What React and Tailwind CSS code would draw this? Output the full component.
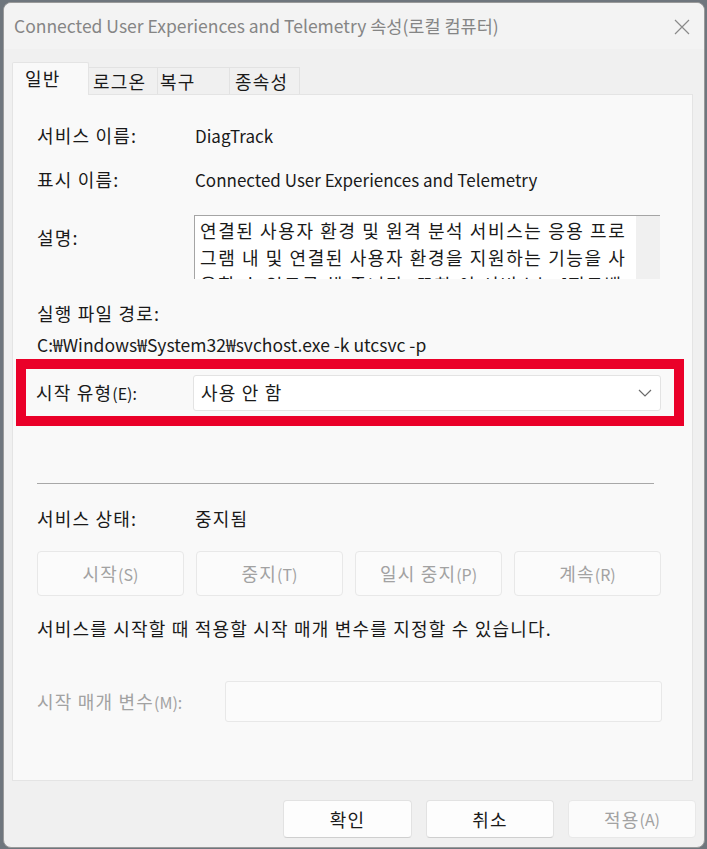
import React from 'react'

const FONT = { fontFamily: '"Noto Sans CJK KR", "Noto Sans", sans-serif' }

const DESC =
  '연결된 사용자 환경 및 원격 분석 서비스는 응용 프로그램 내 및 연결된 사용자 환경을 지원하는 기능을 사용할 수 있도록 해 줍니다. 또한 이 서비스는 [피드백 및 진단]'

function Row({ label, children, className = '' }) {
  return (
    <div className={`flex items-center px-[24px] ${className}`}>
      <div className="w-[158px] shrink-0">{label}</div>
      <div>{children}</div>
    </div>
  )
}

function Btn({ children, disabled, className = '' }) {
  return (
    <div
      className={`flex items-center justify-center rounded-[4px] border ${
        disabled
          ? 'border-[#e8e8e8] bg-[#fbfbfb] text-[#a2a2a2]'
          : 'border-[#e2e2e2] border-b-[#cfcfcf] bg-[#fdfdfd] text-[#1a1a1a]'
      } ${className}`}
    >
      {children}
    </div>
  )
}

export default function App() {
  return (
    <div className="w-[707px] h-[849px] bg-[#6f767d] pt-[2px] pl-[3px] overflow-hidden" style={FONT}>
      <div className="w-[702px] h-[846px] rounded-[8px] border border-[#9a9a9a] bg-[#f0f0f0] flex flex-col text-[18px] tracking-[1.2px] text-[#1a1a1a]">
        {/* title bar */}
        <div className="h-[46px] flex items-center justify-between pl-[10px] pr-[14px] rounded-t-[8px] bg-[#f3f3f3]">
          <span className="text-[#858585] text-[17.5px] tracking-normal">Connected User Experiences and Telemetry 속성(로컬 컴퓨터)</span>
          <svg width="16" height="16" viewBox="0 0 16 16" className="mt-[1px]">
            <path d="M1 1 L15 15 M15 1 L1 15" stroke="#8a8a8a" strokeWidth="1.2" fill="none" />
          </svg>
        </div>

        {/* tabs */}
        <div className="flex items-end h-[45px] pl-[8px]">
          <div className="w-[77px] h-[33px] bg-[#f9f9f9] border border-b-0 border-[#e4e4e4] rounded-t-[2px] pl-[12px] pt-[2px] relative z-10 -mb-px">
            일반
          </div>
          <div className="w-[69px] h-[27px] bg-[#f0f0f0] border border-b-0 border-l-0 border-[#e2e2e2] pl-[4px] leading-[26px]">로그온</div>
          <div className="w-[72px] h-[27px] bg-[#f0f0f0] border border-b-0 border-l-0 border-[#e2e2e2] pl-[2px] leading-[26px]">복구</div>
          <div className="w-[70px] h-[27px] bg-[#f0f0f0] border border-b-0 border-l-0 border-[#e2e2e2] pl-[5px] leading-[26px]">종속성</div>
        </div>

        {/* panel */}
        <div className="mx-[8px] w-[681px] h-[687px] bg-[#f9f9f9] border border-[#e4e4e4] flex flex-col">
          <Row label="서비스 이름:" className="mt-[28px] h-[24px]">
            <span className="text-[17px] tracking-normal">DiagTrack</span>
          </Row>
          <Row label="표시 이름:" className="mt-[20px] h-[24px]">
            <span className="text-[17px] tracking-normal">Connected User Experiences and Telemetry</span>
          </Row>

          <div className="flex px-[24px] mt-[24px]">
            <div className="w-[157px] shrink-0 mt-[9px]">설명:</div>
            <div className="w-[466px] h-[64px] overflow-hidden border-t border-l border-[#a5a5a5] bg-white flex">
              <div className="flex-1 h-[64px] overflow-hidden pl-[5px] pr-[4px] pt-[1px] leading-[27px] tracking-[1.6px] break-all">{DESC}</div>
              <div className="w-[24px] bg-[#f0f0f0] shrink-0"></div>
            </div>
          </div>

          <div className="px-[24px] mt-[22px] h-[24px] leading-[24px]">실행 파일 경로:</div>
          <div className="px-[24px] mt-[8px] h-[24px] leading-[24px] text-[17.5px] tracking-normal">C:₩Windows₩System32₩svchost.exe -k utcsvc -p</div>

          <div className="mt-[2px] ml-[3px] w-[668px] h-[67px] border-[10px] border-[#ea0029] flex items-center pl-[10px]">
            <div className="w-[157px] shrink-0">
              시작 유형<span className="text-[16px] tracking-normal">(E):</span>
            </div>
            <div className="w-[468px] h-[36px] bg-white border border-[#e3e3e3] rounded-[3px] flex items-center justify-between pl-[7px] pr-[8px]">
              <span>사용 안 함</span>
              <svg width="14" height="8" viewBox="0 0 14 8">
                <path d="M1 1 L7 7 L13 1" stroke="#6a6a6a" strokeWidth="1.2" fill="none" />
              </svg>
            </div>
          </div>

          <div className="mt-[57px] ml-[24px] w-[617px] h-px bg-[#a8a8a8]"></div>

          <Row label="서비스 상태:" className="mt-[22px] h-[24px]">중지됨</Row>

          <div className="mt-[21px] ml-[24px] w-[624px] grid grid-cols-4 gap-[12px]">
            <Btn disabled className="h-[45px]">시작<span className="text-[16px] tracking-normal">(S)</span></Btn>
            <Btn disabled className="h-[45px]">중지<span className="text-[16px] tracking-normal">(T)</span></Btn>
            <Btn disabled className="h-[45px]">일시 중지<span className="text-[16px] tracking-normal">(P)</span></Btn>
            <Btn disabled className="h-[45px]">계속<span className="text-[16px] tracking-normal">(R)</span></Btn>
          </div>

          <div className="px-[24px] mt-[20px] h-[24px] leading-[24px]">서비스를 시작할 때 적용할 시작 매개 변수를 지정할 수 있습니다.</div>

          <div className="flex items-center px-[24px] mt-[41px]">
            <div className="w-[188px] shrink-0 text-[#a2a2a2]">
              시작 매개 변수<span className="text-[16px] tracking-normal">(M):</span>
            </div>
            <div className="w-[437px] h-[41px] bg-[#fbfbfb] border border-[#e8e8e8] rounded-[3px]"></div>
          </div>
        </div>

        {/* bottom buttons */}
        <div className="flex justify-end gap-[14px] pr-[8px] mt-[19px]">
          <Btn className="w-[129px] h-[38px]">확인</Btn>
          <Btn className="w-[128px] h-[38px]">취소</Btn>
          <Btn disabled className="w-[128px] h-[38px] bg-[#f5f5f5]">
            적용<span className="text-[16px] tracking-normal">(A)</span>
          </Btn>
        </div>
      </div>
    </div>
  )
}
